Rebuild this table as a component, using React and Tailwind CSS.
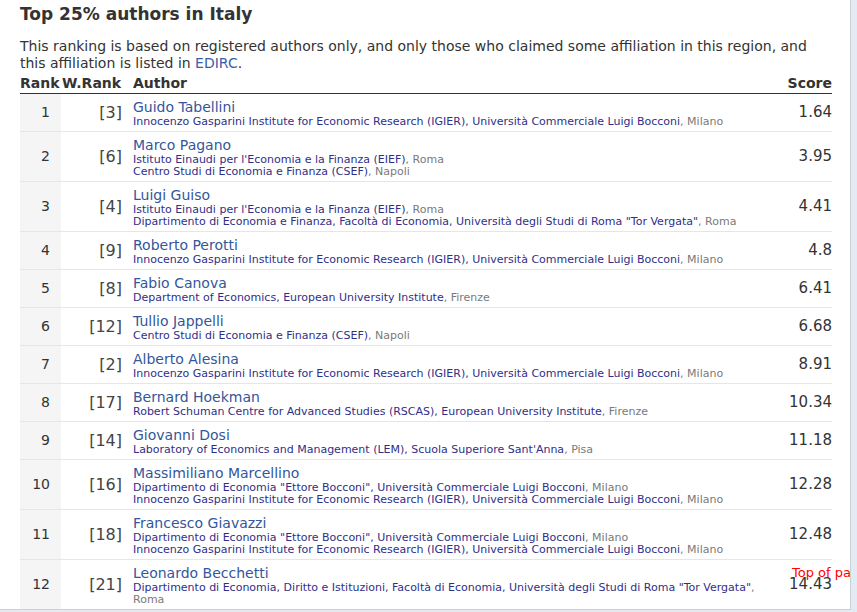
import React from 'react';

const IGIER = ['Innocenzo Gasparini Institute for Economic Research (IGIER), Università Commerciale Luigi Bocconi', 'Milano'];
const EIEF = ["Istituto Einaudi per l'Economia e la Finanza (EIEF)", 'Roma'];
const CSEF = ['Centro Studi di Economia e Finanza (CSEF)', 'Napoli'];
const ETTORE = ['Dipartimento di Economia "Ettore Bocconi", Università Commerciale Luigi Bocconi', 'Milano'];

const authors = [
  { rank: 1, wrank: 3, name: 'Guido Tabellini', affs: [IGIER], score: '1.64' },
  { rank: 2, wrank: 6, name: 'Marco Pagano', affs: [EIEF, CSEF], score: '3.95' },
  {
    rank: 3, wrank: 4, name: 'Luigi Guiso', score: '4.41',
    affs: [EIEF, ['Dipartimento di Economia e Finanza, Facoltà di Economia, Università degli Studi di Roma "Tor Vergata"', 'Roma']],
  },
  { rank: 4, wrank: 9, name: 'Roberto Perotti', affs: [IGIER], score: '4.8' },
  { rank: 5, wrank: 8, name: 'Fabio Canova', affs: [['Department of Economics, European University Institute', 'Firenze']], score: '6.41' },
  { rank: 6, wrank: 12, name: 'Tullio Jappelli', affs: [CSEF], score: '6.68' },
  { rank: 7, wrank: 2, name: 'Alberto Alesina', affs: [IGIER], score: '8.91' },
  {
    rank: 8, wrank: 17, name: 'Bernard Hoekman', score: '10.34',
    affs: [['Robert Schuman Centre for Advanced Studies (RSCAS), European University Institute', 'Firenze']],
  },
  {
    rank: 9, wrank: 14, name: 'Giovanni Dosi', score: '11.18',
    affs: [["Laboratory of Economics and Management (LEM), Scuola Superiore Sant'Anna", 'Pisa']],
  },
  { rank: 10, wrank: 16, name: 'Massimiliano Marcellino', affs: [ETTORE, IGIER], score: '12.28' },
  { rank: 11, wrank: 18, name: 'Francesco Giavazzi', affs: [ETTORE, IGIER], score: '12.48' },
  {
    rank: 12, wrank: 21, name: 'Leonardo Becchetti', score: '14.43',
    affs: [['Dipartimento di Economia, Diritto e Istituzioni, Facoltà di Economia, Università degli Studi di Roma "Tor Vergata"', 'Roma']],
  },
];

export default function App() {
  return (
    <div className="min-h-screen bg-[#e4eaf2]" style={{ fontFamily: '"DejaVu Sans", Verdana, sans-serif' }}>
      <div className="relative h-[610px] w-[851px] overflow-hidden border-r border-b border-[#c8d0da] bg-white">
        <div className="pl-5 pr-[18px] pt-[3px]">
          <h1 className="text-[17px] font-bold leading-[22px] text-[#333]">Top 25% authors in Italy</h1>

          <p className="mt-[13px] text-[14px] leading-[17px] text-[#333]">
            This ranking is based on registered authors only, and only those who claimed some affiliation in this region, and
            this affiliation is listed in <span className="text-[#3b5ea6]">EDIRC</span>.
          </p>

          <table className="mt-px w-[812px] table-fixed border-collapse text-[#333]">
            <colgroup>
              <col className="w-[41px]" />
              <col className="w-[66px]" />
              <col />
              <col className="w-[56px]" />
            </colgroup>
            <thead>
              <tr className="border-b border-[#333] text-[14px] font-bold leading-[20px]">
                <th className="p-0 text-left">Rank</th>
                <th className="p-0 pl-px text-left">W.Rank</th>
                <th className="p-0 pl-[6px] text-left">Author</th>
                <th className="p-0 text-right">Score</th>
              </tr>
            </thead>
            <tbody>
              {authors.map((a) => (
                <tr key={a.rank} className="border-b border-[#e6e6e6]">
                  <td className="bg-[#f5f5f5] pr-[11px] text-right align-middle text-[14px]">{a.rank}</td>
                  <td className="pr-[5px] text-right align-middle text-[16px] text-[#444]">[{a.wrank}]</td>
                  <td className="pt-1 pb-[3px] pl-[6px] align-top">
                    <div className="text-[14px] leading-[18px] text-[#34569b]">{a.name}</div>
                    {a.affs.map((af, i) => (
                      <div key={i} className="text-[11px] leading-[12px] text-[#2f2f88]">
                        {af[0]}
                        <span className="text-[#7a7a7a]">, {af[1]}</span>
                      </div>
                    ))}
                  </td>
                  <td className="text-right align-middle text-[15px]">{a.score}</td>
                </tr>
              ))}
            </tbody>
          </table>
        </div>

        <span className="absolute left-[792px] top-[563px] whitespace-nowrap text-[13px] text-[#ff0000]">Top of page</span>
      </div>
    </div>
  );
}
